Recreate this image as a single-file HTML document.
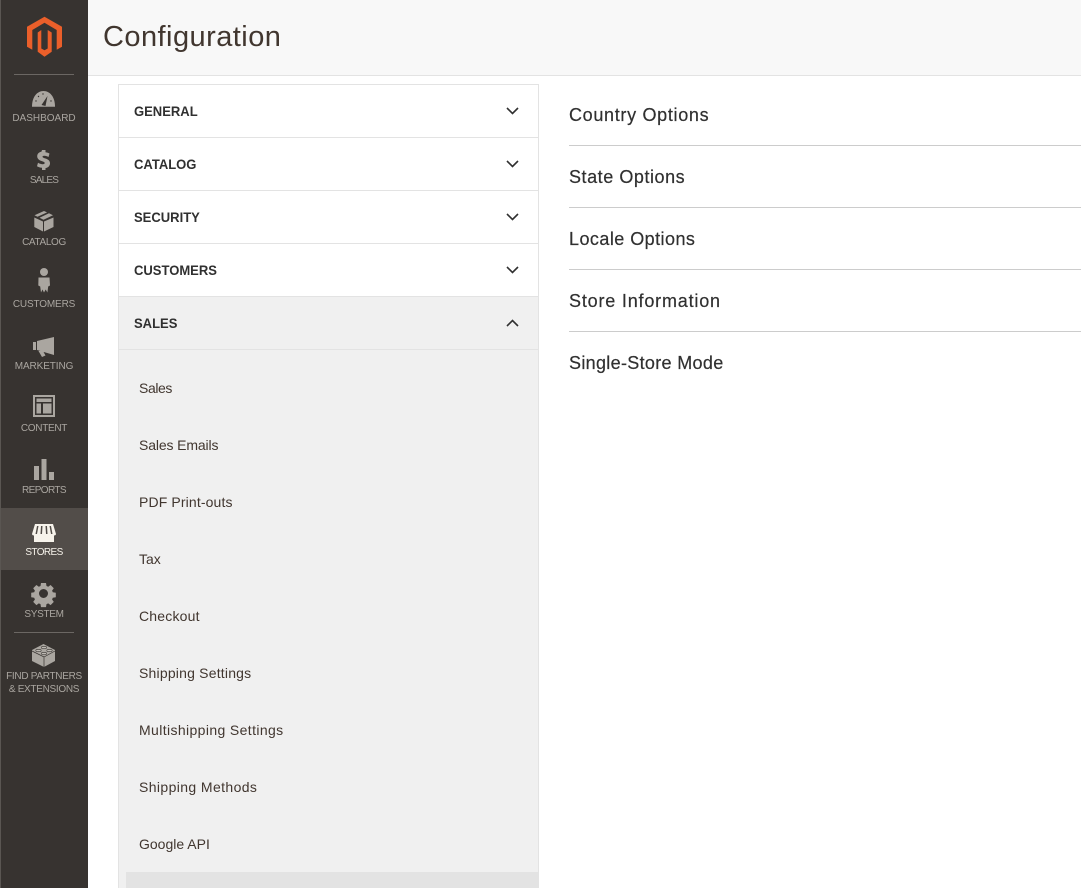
<!DOCTYPE html>
<html><head><meta charset="utf-8"><style>
html,body{margin:0;padding:0;background:#fff}
body{width:1081px;height:888px;position:relative;overflow:hidden;font-family:"Liberation Sans",sans-serif;color:#303030}
.a{position:absolute;white-space:nowrap}
#side{position:absolute;left:0;top:0;width:88px;height:888px;background:#373330;border-left:1px solid #5a5652;box-sizing:border-box}
.n{position:absolute;left:0;width:88px;text-align:center;font-size:10px;color:#aaa6a0;line-height:14px;white-space:nowrap}
.h{left:134px;font-size:14px;font-weight:bold;color:#303030;line-height:18px;transform:scaleX(.93);transform-origin:0 50%}
.s{left:139px;font-size:14px;color:#41362f;line-height:18px}
.r{left:569px;font-size:18px;color:#303030;line-height:24px;-webkit-text-stroke:.2px #303030}
.l{position:absolute;height:1px;background:#e3e3e3}
.d{position:absolute;left:569px;width:512px;height:1px;background:#cccccc}
svg{position:absolute;overflow:visible}
</style></head><body>
<div class="a" style="left:88px;top:0;width:993px;height:75px;background:#f8f8f8"></div>
<div class="l" style="left:88px;top:75px;width:993px"></div>
<div class="a" style="left:103px;top:19px;font-size:29px;line-height:36px;color:#41362f;letter-spacing:.45px">Configuration</div>

<!-- Left menu -->
<div class="a" style="left:118px;top:84px;width:421px;height:804px;box-sizing:border-box;border:1px solid #e3e3e3;background:#fff"></div>
<div class="a" style="left:119px;top:297px;width:419px;height:591px;background:#f0f0f0"></div>
<div class="l" style="left:119px;top:137px;width:419px"></div>
<div class="l" style="left:119px;top:190px;width:419px"></div>
<div class="l" style="left:119px;top:243px;width:419px"></div>
<div class="l" style="left:119px;top:296px;width:419px"></div>
<div class="l" style="left:119px;top:349px;width:419px"></div>
<div class="a" style="left:126px;top:872px;width:412px;height:16px;background:#e3e3e3"></div>

<div class="a h" style="top:102px">GENERAL</div>
<div class="a h" style="top:155px">CATALOG</div>
<div class="a h" style="top:208px">SECURITY</div>
<div class="a h" style="top:261px">CUSTOMERS</div>
<div class="a h" style="top:314px">SALES</div>

<svg style="left:0;top:0" width="1081" height="888" fill="none" stroke="#303030" stroke-width="1.6">
<path d="M507 108l5.500 5.500 5.500-5.500"/><path d="M507 161l5.500 5.500 5.500-5.500"/><path d="M507 214l5.500 5.500 5.500-5.500"/><path d="M507 267l5.500 5.500 5.500-5.500"/><path d="M507 326l5.500-5.500 5.500 5.500"/>
</svg>

<div class="a s" style="top:379px;letter-spacing:-.4px">Sales</div>
<div class="a s" style="top:436px;letter-spacing:-.13px">Sales Emails</div>
<div class="a s" style="top:493px;letter-spacing:.13px">PDF Print-outs</div>
<div class="a s" style="top:550px;letter-spacing:0">Tax</div>
<div class="a s" style="top:607px;letter-spacing:.2px">Checkout</div>
<div class="a s" style="top:664px;letter-spacing:.2px">Shipping Settings</div>
<div class="a s" style="top:721px;letter-spacing:.38px">Multishipping Settings</div>
<div class="a s" style="top:778px;letter-spacing:.39px">Shipping Methods</div>
<div class="a s" style="top:835px;letter-spacing:0">Google API</div>

<!-- Right -->
<div class="a r" style="top:103px;letter-spacing:.68px">Country Options</div><div class="d" style="top:145px"></div>
<div class="a r" style="top:165px;letter-spacing:.55px">State Options</div><div class="d" style="top:207px"></div>
<div class="a r" style="top:227px;letter-spacing:.45px">Locale Options</div><div class="d" style="top:269px"></div>
<div class="a r" style="top:289px;letter-spacing:.81px">Store Information</div><div class="d" style="top:331px"></div>
<div class="a r" style="top:351px;letter-spacing:.32px">Single-Store Mode</div>

<!-- Sidebar -->
<div id="side"></div>
<div class="a" style="left:1px;top:508px;width:87px;height:62px;background:#524d49"></div>
<div class="a" style="left:14px;top:74px;width:60px;height:1px;background:#6b6763"></div>
<div class="a" style="left:14px;top:632px;width:60px;height:1px;background:#6b6763"></div>

<svg style="left:0;top:0" width="88" height="700">
<path fill="#eb5f2a" d="M44.500 16.700L62 26.700V46.700L56.700 49.700V30L44.500 22.700 32.300 30V49.700L27 46.700V26.700Z"/>
<path fill="#eb5f2a" d="M41.300 30V48.500L44.500 50.200 47.700 48.500V30L51.700 32.500V51.700L44.500 56.700 37.700 51.700V32.500Z"/>
<g fill="#aaa6a0">
<path d="M32 106.700C32 97 37 91 43.500 91S55 97 55 106.700Z"/>
<path d="M41.500 105L47.500 96 45.500 106Z" fill="#373330"/>
<g fill="#373330"><circle cx="36" cy="101" r=".7"/><circle cx="38.500" cy="96.500" r=".7"/><circle cx="43" cy="94" r=".7"/><circle cx="51" cy="101" r=".7"/></g>
<path d="M42 150h3.500v2.300c1.800.2 3 .7 4 1.300l-1 3.400c-1.200-.7-2.800-1.300-4.300-1.300-1.100 0-1.700.4-1.700 1 0 .7 1 1.100 3 1.800 3 1 4.500 2.500 4.500 4.900 0 2.400-1.700 4.200-4.500 4.700V170h-3.500v-2.200c-2-.2-3.800-.8-5-1.600l1-3.500c1.300.8 3.100 1.500 4.700 1.500 1.300 0 2-.5 2-1.200 0-.8-.8-1.200-2.800-1.900-2.900-1-4.700-2.400-4.700-4.900 0-2.300 1.600-4.100 4.300-4.600Z"/>
<path d="M44 211l-9.500 4.200 3 1.600 9.600-4.400ZM49 213.200l-9.500 4.500 4 2 9.500-4.500ZM34.300 217.500V227l8.700 4.500v-10ZM53.500 217.500V227L44 231.500v-10Z"/>
<circle cx="44" cy="272" r="4"/><path d="M38.500 277.500h11l.5 8-1.800 1-.8 6-1.700-3-1.700 3-1.500-3-1.500 3-.8-6-1.900-1Z"/>
<path d="M33 342h3v8h-3ZM37 341l17-4v18l-17-5ZM38.500 351h4.500l2.500 4.500-3.500 1.500Z"/>
<path fill-rule="evenodd" d="M33 395h22v22H33Zm2 2v18h18v-18ZM36.500 398.500h15v3.500h-15ZM36.500 403.500h4.500v10h-4.500ZM43 403.500h8.500v10H43Z"/>
<path d="M34 466h5v14h-5ZM41.500 459h5v21h-5ZM49 472h5v8h-5Z"/>
</g>
<path fill="#f7f3eb" d="M35 524h18l3 10c0 1-1 1.500-2 1.500V542H34v-6.500c-1 0-2-.5-2-1.500Z"/>
<path fill="#524d49" d="M37 526h1.500l-1.500 8h-1.500ZM41 526h1.500l-.5 8h-1.500ZM45.500 526H47l.5 8H46ZM49.500 526H51l1.500 8H51Z"/>
<path fill="#aaa6a0" fill-rule="evenodd" d="M41.500 583h5l.5 3 1.700.7 2.400-1.700 3.200 3.200-1.700 2.400.7 1.700 3 .5v4.500l-3 .5-.7 1.700 1.700 2.400-3.200 3.200-2.400-1.700-1.700.7-.5 3h-5l-.5-3-1.700-.7-2.400 1.700-3.200-3.200 1.700-2.400-.7-1.700-3-.5v-4.500l3-.5.7-1.700-1.700-2.400 3.200-3.200 2.400 1.700 1.700-.7ZM44 589a4.500 4.500 0 1 0 0 9 4.500 4.500 0 0 0 0-9Z" transform="translate(-.5 0)"/>
<path fill="#aaa6a0" d="M43.500 644L55 650v11L44 667 32 661V650Z"/>
<path fill="none" stroke="#373330" stroke-width=".7" d="M32 651l12 6 11-6M44 657v10"/>
<g fill="#bdb9b3" stroke="#373330" stroke-width=".6"><ellipse cx="44" cy="647.500" rx="2.700" ry="1.200"/><ellipse cx="38.500" cy="650.500" rx="2.700" ry="1.200"/><ellipse cx="49.500" cy="650.500" rx="2.700" ry="1.200"/><ellipse cx="44" cy="653.500" rx="2.700" ry="1.200"/></g>
</svg>

<div class="n" style="top:112px;letter-spacing:0">DASHBOARD</div>
<div class="n" style="top:174px;letter-spacing:-.8px">SALES</div>
<div class="n" style="top:236px;letter-spacing:-.35px">CATALOG</div>
<div class="n" style="top:298px;letter-spacing:-.15px">CUSTOMERS</div>
<div class="n" style="top:360px;letter-spacing:-.1px">MARKETING</div>
<div class="n" style="top:422px;letter-spacing:-.3px">CONTENT</div>
<div class="n" style="top:484px;letter-spacing:-.6px">REPORTS</div>
<div class="n" style="top:546px;color:#f7f3eb;letter-spacing:-.6px">STORES</div>
<div class="n" style="top:608px;letter-spacing:-.3px">SYSTEM</div>
<div class="n" style="top:670px;line-height:13px;letter-spacing:-.3px">FIND PARTNERS<br>&amp; EXTENSIONS</div>
</body></html>
